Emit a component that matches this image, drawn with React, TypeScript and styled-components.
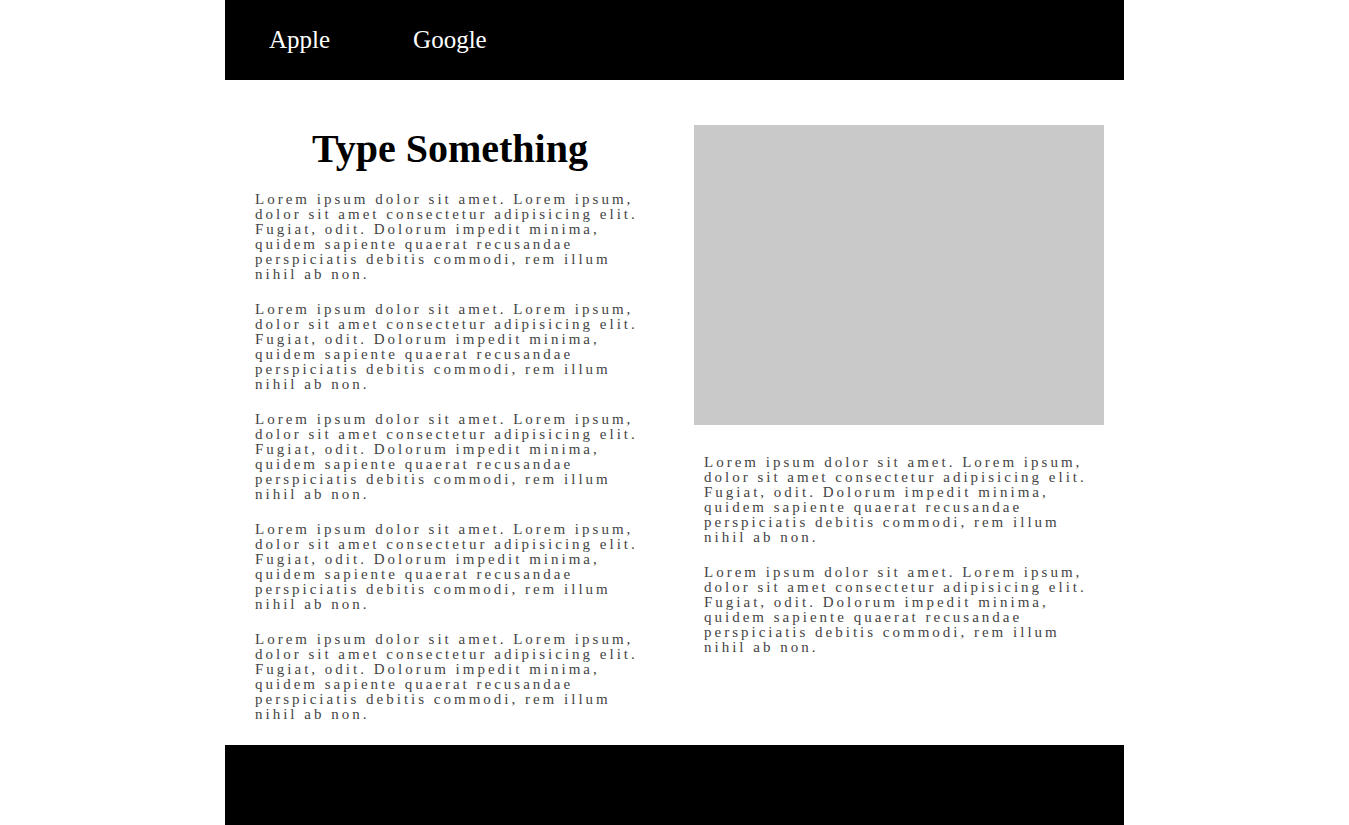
import styled, { createGlobalStyle } from 'styled-components';

const lorem =
  'Lorem ipsum dolor sit amet. Lorem ipsum, dolor sit amet consectetur adipisicing elit. Fugiat, odit. Dolorum impedit minima, quidem sapiente quaerat recusandae perspiciatis debitis commodi, rem illum nihil ab non.';

const App = () => {
  return (
    <>
      <GlobalStyle />
      <Page>
        <Header>
          <NavLink href='#'>Apple</NavLink>
          <NavLink href='#'>Google</NavLink>
        </Header>
        <Main>
          <LeftColumn>
            <Title>Type Something</Title>
            {[0, 1, 2, 3, 4].map((i) => (
              <Text key={i}>{lorem}</Text>
            ))}
          </LeftColumn>
          <RightColumn>
            <ImageBox />
            <RightText>
              <Text>{lorem}</Text>
              <Text>{lorem}</Text>
            </RightText>
          </RightColumn>
        </Main>
        <Footer />
      </Page>
    </>
  );
};

export default App;

/** STYLES */

const GlobalStyle = createGlobalStyle`
  body {
    margin: 0;
    background: #fff;
    font-family: 'Liberation Serif', 'Times New Roman', serif;
  }
`;

const Page = styled.div`
  width: 899px;
  margin: 0 auto;
`;

const Header = styled.nav`
  height: 80px;
  background: #000;
  display: flex;
  align-items: center;
  gap: 83px;
  padding-left: 44px;
`;

const NavLink = styled.a`
  color: #fff;
  font-size: 25px;
  text-decoration: none;
`;

const Main = styled.main`
  display: grid;
  grid-template-columns: 450px 449px;
  padding: 45px 0 3px;
`;

const LeftColumn = styled.section`
  padding: 0 30px;
`;

const Title = styled.h1`
  margin: 0 0 20px;
  font-size: 40px;
  font-weight: bold;
  text-align: center;
  color: #000;
`;

const Text = styled.p`
  margin: 0 0 20px;
  font-size: 15px;
  line-height: 15px;
  letter-spacing: 3px;
  color: #444;
`;

const RightColumn = styled.section`
  padding: 0 20px 0 19px;
`;

const ImageBox = styled.div`
  height: 300px;
  background: #c9c9c9;
  margin-bottom: 30px;
`;

const RightText = styled.div`
  padding: 0 10px;
`;

const Footer = styled.footer`
  height: 80px;
  background: #000;
`;
